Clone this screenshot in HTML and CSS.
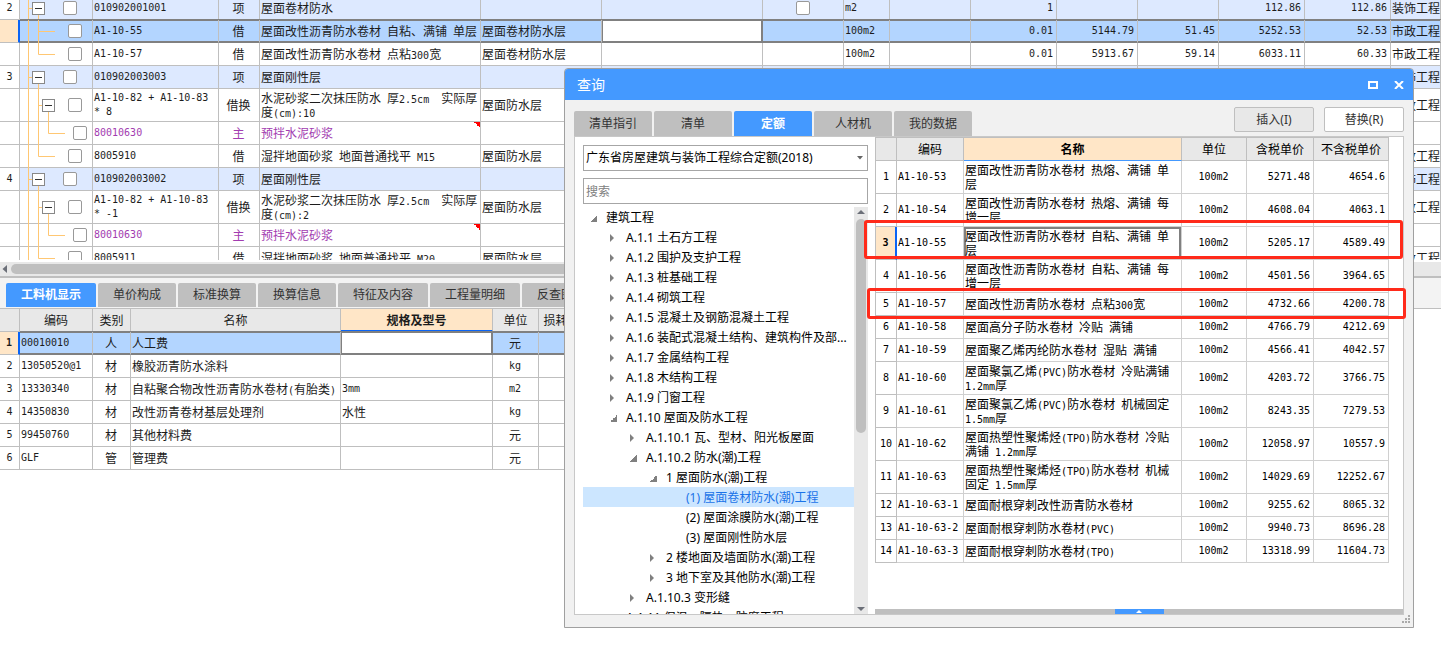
FILE: index.html
```html
<!DOCTYPE html>
<html lang="zh-CN">
<head>
<meta charset="utf-8">
<title>查询</title>
<link rel="stylesheet" href="styles.css">
</head>
<body>
<svg class="defs" aria-hidden="true">
  <symbol id="l1"><path d="M8.500 11.500H12"/><line x1="8.500" y1="0" x2="8.500" y2="100%"/><line x1="18.500" y1="18" x2="18.500" y2="100%"/></symbol>
  <symbol id="l2"><line x1="8.500" y1="0" x2="8.500" y2="100%"/><line x1="18.500" y1="0" x2="18.500" y2="100%"/><path d="M18.500 11.500H35"/></symbol>
  <symbol id="l2end"><line x1="8.500" y1="0" x2="8.500" y2="100%"/><path d="M18.500 0V11.500H35"/></symbol>
  <symbol id="l2open"><line x1="8.500" y1="0" x2="8.500" y2="100%"/><line x1="18.500" y1="0" x2="18.500" y2="100%"/><path d="M18.500 16.500H22"/><line x1="28.500" y1="22" x2="28.500" y2="100%"/></symbol>
  <symbol id="l3"><line x1="8.500" y1="0" x2="8.500" y2="100%"/><line x1="18.500" y1="0" x2="18.500" y2="100%"/><path d="M28.500 0V11.500H45"/></symbol>
</svg>

<main class="workspace">
  <div class="sheet-view">
    <table class="grid sheet">
      <colgroup><col class="w20"><col class="w73"><col class="w126"><col class="w41"><col class="w221"><col class="w121"><col class="w161"><col class="w81"><col class="w46"><col class="w81"><col class="w86"><col class="w81"><col class="w81"><col class="w86"><col class="w86"><col></colgroup>
      <tbody>
      <tr class="item"><th class="n">2</th><td class="branch"><svg class="lines"><use href="#l1"/></svg><div class="node d1"><button class="fold" aria-label="折叠"></button><input type="checkbox" aria-label="选择"></div></td><td class="n">010902001001</td><td class="c">项</td><td>屋面卷材防水</td><td></td><td></td><td class="c"><input type="checkbox" aria-label="汇总"></td><td class="n">m2</td><td></td><td class="n r">1</td><td></td><td></td><td class="n r">112.86</td><td class="n r">112.86</td><td>装饰工程</td></tr>
      <tr class="sel"><th></th><td class="branch"><svg class="lines"><use href="#l2"/></svg><div class="node leaf2"><input type="checkbox" aria-label="选择"></div></td><td class="n">A1-10-55</td><td class="c">借</td><td>屋面改性沥青防水卷材<span class="n"> </span>自粘、满铺<span class="n"> </span>单层</td><td>屋面卷材防水层</td><td class="edit"></td><td></td><td class="n">100m2</td><td></td><td class="n r">0.01</td><td class="n r">5144.79</td><td class="n r">51.45</td><td class="n r">5252.53</td><td class="n r">52.53</td><td>市政工程</td></tr>
      <tr><th></th><td class="branch"><svg class="lines"><use href="#l2end"/></svg><div class="node leaf2"><input type="checkbox" aria-label="选择"></div></td><td class="n">A1-10-57</td><td class="c">借</td><td>屋面改性沥青防水卷材<span class="n"> </span>点粘<span class="n">300</span>宽</td><td>屋面卷材防水层</td><td></td><td></td><td class="n">100m2</td><td></td><td class="n r">0.01</td><td class="n r">5913.67</td><td class="n r">59.14</td><td class="n r">6033.11</td><td class="n r">60.33</td><td>市政工程</td></tr>
      <tr class="item"><th class="n">3</th><td class="branch"><svg class="lines"><use href="#l1"/></svg><div class="node d1"><button class="fold" aria-label="折叠"></button><input type="checkbox" aria-label="选择"></div></td><td class="n">010902003003</td><td class="c">项</td><td>屋面刚性层</td><td></td><td></td><td></td><td></td><td></td><td></td><td></td><td></td><td></td><td></td><td>装饰工程</td></tr>
      <tr class="tall"><th></th><td class="branch"><svg class="lines"><use href="#l2open"/></svg><div class="node d2"><button class="fold" aria-label="折叠"></button><input type="checkbox" aria-label="选择"></div></td><td class="n">A1-10-82 + A1-10-83<br>* 8</td><td class="c">借换</td><td>水泥砂浆二次抹压防水<span class="n"> </span>厚<span class="n">2.5cm&nbsp; </span>实际厚<br>度<span class="n">(cm):10</span></td><td>屋面防水层</td><td></td><td></td><td></td><td></td><td></td><td></td><td></td><td></td><td></td><td>市政工程</td></tr>
      <tr class="main-material"><th></th><td class="branch"><svg class="lines"><use href="#l3"/></svg><div class="node leaf3"><input type="checkbox" aria-label="选择"></div></td><td class="n">80010630</td><td class="c">主</td><td class="flagged">预拌水泥砂浆</td><td></td><td></td><td></td><td></td><td></td><td></td><td></td><td></td><td></td><td></td><td></td></tr>
      <tr><th></th><td class="branch"><svg class="lines"><use href="#l2end"/></svg><div class="node leaf2"><input type="checkbox" aria-label="选择"></div></td><td class="n">8005910</td><td class="c">借</td><td>湿拌地面砂浆<span class="n"> </span>地面普通找平<span class="n"> M15</span></td><td>屋面防水层</td><td></td><td></td><td></td><td></td><td></td><td></td><td></td><td></td><td></td><td>市政工程</td></tr>
      <tr class="item"><th class="n">4</th><td class="branch"><svg class="lines"><use href="#l1"/></svg><div class="node d1"><button class="fold" aria-label="折叠"></button><input type="checkbox" aria-label="选择"></div></td><td class="n">010902003002</td><td class="c">项</td><td>屋面刚性层</td><td></td><td></td><td></td><td></td><td></td><td></td><td></td><td></td><td></td><td></td><td>装饰工程</td></tr>
      <tr class="tall"><th></th><td class="branch"><svg class="lines"><use href="#l2open"/></svg><div class="node d2"><button class="fold" aria-label="折叠"></button><input type="checkbox" aria-label="选择"></div></td><td class="n">A1-10-82 + A1-10-83<br>* -1</td><td class="c">借换</td><td>水泥砂浆二次抹压防水<span class="n"> </span>厚<span class="n">2.5cm&nbsp; </span>实际厚<br>度<span class="n">(cm):2</span></td><td>屋面防水层</td><td></td><td></td><td></td><td></td><td></td><td></td><td></td><td></td><td></td><td>市政工程</td></tr>
      <tr class="main-material"><th></th><td class="branch"><svg class="lines"><use href="#l3"/></svg><div class="node leaf3"><input type="checkbox" aria-label="选择"></div></td><td class="n">80010630</td><td class="c">主</td><td class="flagged">预拌水泥砂浆</td><td></td><td></td><td></td><td></td><td></td><td></td><td></td><td></td><td></td><td></td><td></td></tr>
      <tr><th></th><td class="branch"><svg class="lines"><use href="#l2end"/></svg><div class="node leaf2"><input type="checkbox" aria-label="选择"></div></td><td class="n">8005911</td><td class="c">借</td><td>湿拌地面砂浆<span class="n"> </span>地面普通找平<span class="n"> M20</span></td><td>屋面防水层</td><td></td><td></td><td></td><td></td><td></td><td></td><td></td><td></td><td></td><td>市政工程</td></tr>
      </tbody>
    </table>
  </div>

  <div class="hscroll"><svg width="11" height="14" viewBox="0 0 11 14"><path d="M7 3v8L2.500 7z" fill="#6b6f78"/></svg><div class="hthumb"></div></div>

  <nav class="tabs detail-tabs" role="tablist">
    <button class="tab active" role="tab">工料机显示</button>
    <button class="tab" role="tab">单价构成</button>
    <button class="tab" role="tab">标准换算</button>
    <button class="tab" role="tab">换算信息</button>
    <button class="tab" role="tab">特征及内容</button>
    <button class="tab" role="tab">工程量明细</button>
    <button class="tab" role="tab">反查图形工程量</button>
  </nav>

  <table class="grid detail">
    <colgroup><col class="w20"><col class="w73"><col class="w38"><col class="w210"><col class="w152"><col class="w46"><col class="w46"></colgroup>
    <thead><tr><th></th><th>编码</th><th>类别</th><th>名称</th><th class="hot">规格及型号</th><th>单位</th><th>损耗率</th></tr></thead>
    <tbody>
    <tr class="sel"><th class="n">1</th><td class="n first">00010010</td><td class="c">人</td><td>人工费</td><td class="edit"></td><td class="c">元</td><td></td></tr>
    <tr><th class="n">2</th><td class="n">13050520@1</td><td class="c">材</td><td>橡胶沥青防水涂料</td><td></td><td class="n c">kg</td><td></td></tr>
    <tr><th class="n">3</th><td class="n">13330340</td><td class="c">材</td><td>自粘聚合物改性沥青防水卷材<span class="n">(</span>有胎类<span class="n">)</span></td><td class="n">3mm</td><td class="n c">m2</td><td></td></tr>
    <tr><th class="n">4</th><td class="n">14350830</td><td class="c">材</td><td>改性沥青卷材基层处理剂</td><td>水性</td><td class="n c">kg</td><td></td></tr>
    <tr><th class="n">5</th><td class="n">99450760</td><td class="c">材</td><td>其他材料费</td><td></td><td class="c">元</td><td></td></tr>
    <tr><th class="n">6</th><td class="n">GLF</td><td class="c">管</td><td>管理费</td><td></td><td class="c">元</td><td></td></tr>
    </tbody>
  </table>
</main>

<section class="dialog" role="dialog" aria-labelledby="dialog-title">
  <header class="titlebar">
    <h1 id="dialog-title">查询</h1>
    <button class="win" aria-label="最大化"><svg width="10" height="8" viewBox="0 0 10 8"><path d="M0 0h10v8H0zM2 2v4h6V2z" fill="#fff" fill-rule="evenodd"/></svg></button>
    <button class="win" aria-label="关闭"><svg width="10" height="8" viewBox="0 0 10 8"><path d="M1 0l8 8M9 0L1 8" stroke="#fff" stroke-width="2"/></svg></button>
  </header>
  <div class="toolbar">
    <nav class="tabs query-tabs" role="tablist">
      <button class="tab" role="tab">清单指引</button>
      <button class="tab" role="tab">清单</button>
      <button class="tab active" role="tab">定额</button>
      <button class="tab" role="tab">人材机</button>
      <button class="tab" role="tab">我的数据</button>
    </nav>
    <div class="actions"><button class="btn insert">插入(I)</button><button class="btn">替换(R)</button></div>
  </div>
  <div class="panes">
    <div class="catalog">
      <div class="picker">
        <select aria-label="定额库"><option>广东省房屋建筑与装饰工程综合定额(2018)</option></select>
        <svg width="6" height="4" viewBox="0 0 6 4"><path d="M0 0h6L3 3.500z" fill="#666"/></svg>
      </div>
      <input class="search" type="text" placeholder="搜索" aria-label="搜索">
      <div class="tree-view">
        <ul class="tree">
          <li class="t0 open">建筑工程</li>
          <li class="t1 shut">A.1.1 土石方工程</li>
          <li class="t1 shut">A.1.2 围护及支护工程</li>
          <li class="t1 shut">A.1.3 桩基础工程</li>
          <li class="t1 shut">A.1.4 砌筑工程</li>
          <li class="t1 shut">A.1.5 混凝土及钢筋混凝土工程</li>
          <li class="t1 shut">A.1.6 装配式混凝土结构、建筑构件及部...</li>
          <li class="t1 shut">A.1.7 金属结构工程</li>
          <li class="t1 shut">A.1.8 木结构工程</li>
          <li class="t1 shut">A.1.9 门窗工程</li>
          <li class="t1 open">A.1.10 屋面及防水工程</li>
          <li class="t2 shut">A.1.10.1 瓦、型材、阳光板屋面</li>
          <li class="t2 open">A.1.10.2 防水(潮)工程</li>
          <li class="t3 open">1 屋面防水(潮)工程</li>
          <li class="t4 current">(1) 屋面卷材防水(潮)工程</li>
          <li class="t4">(2) 屋面涂膜防水(潮)工程</li>
          <li class="t4">(3) 屋面刚性防水层</li>
          <li class="t3 shut">2 楼地面及墙面防水(潮)工程</li>
          <li class="t3 shut">3 地下室及其他防水(潮)工程</li>
          <li class="t2 shut">A.1.10.3 变形缝</li>
          <li class="t1 shut">A.1.11 保温、隔热、防腐工程</li>
        </ul>
        <div class="vscroll">
          <svg width="14" height="12" viewBox="0 0 14 12"><path d="M3 7h8L7 3z" fill="#6b6f78"/></svg>
          <div class="vthumb"></div>
          <svg width="14" height="12" viewBox="0 0 14 12"><path d="M3 5h8L7 9z" fill="#6b6f78"/></svg>
        </div>
      </div>
    </div>
    <div class="results">
      <table class="grid quota">
        <colgroup><col class="w22"><col class="w67"><col class="w218"><col class="w65"><col class="w67"><col class="w75"></colgroup>
        <thead><tr><th></th><th>编码</th><th class="hot">名称</th><th>单位</th><th>含税单价</th><th>不含税单价</th></tr></thead>
        <tbody>
        <tr class="tall"><th class="n">1</th><td class="n">A1-10-53</td><td>屋面改性沥青防水卷材<span class="n"> </span>热熔、满铺<span class="n"> </span>单<br>层</td><td class="n c">100m2</td><td class="n r">5271.48</td><td class="n r">4654.6</td></tr>
        <tr class="tall"><th class="n">2</th><td class="n">A1-10-54</td><td>屋面改性沥青防水卷材<span class="n"> </span>热熔、满铺<span class="n"> </span>每<br>增一层</td><td class="n c">100m2</td><td class="n r">4608.04</td><td class="n r">4063.1</td></tr>
        <tr class="tall picked"><th class="n">3</th><td class="n">A1-10-55</td><td class="focus">屋面改性沥青防水卷材<span class="n"> </span>自粘、满铺<span class="n"> </span>单<br>层</td><td class="n c">100m2</td><td class="n r">5205.17</td><td class="n r">4589.49</td></tr>
        <tr class="tall"><th class="n">4</th><td class="n">A1-10-56</td><td>屋面改性沥青防水卷材<span class="n"> </span>自粘、满铺<span class="n"> </span>每<br>增一层</td><td class="n c">100m2</td><td class="n r">4501.56</td><td class="n r">3964.65</td></tr>
        <tr><th class="n">5</th><td class="n">A1-10-57</td><td>屋面改性沥青防水卷材<span class="n"> </span>点粘<span class="n">300</span>宽</td><td class="n c">100m2</td><td class="n r">4732.66</td><td class="n r">4200.78</td></tr>
        <tr><th class="n">6</th><td class="n">A1-10-58</td><td>屋面高分子防水卷材<span class="n"> </span>冷贴<span class="n"> </span>满铺</td><td class="n c">100m2</td><td class="n r">4766.79</td><td class="n r">4212.69</td></tr>
        <tr><th class="n">7</th><td class="n">A1-10-59</td><td>屋面聚乙烯丙纶防水卷材<span class="n"> </span>湿贴<span class="n"> </span>满铺</td><td class="n c">100m2</td><td class="n r">4566.41</td><td class="n r">4042.57</td></tr>
        <tr class="tall"><th class="n">8</th><td class="n">A1-10-60</td><td>屋面聚氯乙烯<span class="n">(PVC)</span>防水卷材<span class="n"> </span>冷贴满铺<br><span class="n">1.2mm</span>厚</td><td class="n c">100m2</td><td class="n r">4203.72</td><td class="n r">3766.75</td></tr>
        <tr class="tall"><th class="n">9</th><td class="n">A1-10-61</td><td>屋面聚氯乙烯<span class="n">(PVC)</span>防水卷材<span class="n"> </span>机械固定<br><span class="n">1.5mm</span>厚</td><td class="n c">100m2</td><td class="n r">8243.35</td><td class="n r">7279.53</td></tr>
        <tr class="tall"><th class="n">10</th><td class="n">A1-10-62</td><td>屋面热塑性聚烯烃<span class="n">(TPO)</span>防水卷材<span class="n"> </span>冷贴<br>满铺<span class="n"> 1.2mm</span>厚</td><td class="n c">100m2</td><td class="n r">12058.97</td><td class="n r">10557.9</td></tr>
        <tr class="tall"><th class="n">11</th><td class="n">A1-10-63</td><td>屋面热塑性聚烯烃<span class="n">(TPO)</span>防水卷材<span class="n"> </span>机械<br>固定<span class="n"> 1.5mm</span>厚</td><td class="n c">100m2</td><td class="n r">14029.69</td><td class="n r">12252.67</td></tr>
        <tr><th class="n">12</th><td class="n">A1-10-63-1</td><td>屋面耐根穿刺改性沥青防水卷材</td><td class="n c">100m2</td><td class="n r">9255.62</td><td class="n r">8065.32</td></tr>
        <tr><th class="n">13</th><td class="n">A1-10-63-2</td><td>屋面耐根穿刺防水卷材<span class="n">(PVC)</span></td><td class="n c">100m2</td><td class="n r">9940.73</td><td class="n r">8696.28</td></tr>
        <tr><th class="n">14</th><td class="n">A1-10-63-3</td><td>屋面耐根穿刺防水卷材<span class="n">(TPO)</span></td><td class="n c">100m2</td><td class="n r">13318.99</td><td class="n r">11604.73</td></tr>
        </tbody>
      </table>
      <div class="drawer"><button aria-label="展开"><svg width="6" height="3" viewBox="0 0 6 3"><path d="M0 3h6L3 0z" fill="#fff"/></svg></button></div>
    </div>
  </div>
  <svg class="grip" width="8" height="8" viewBox="0 0 8 8"><path d="M6 0h2v2H6zM3 3h2v2H3zM6 3h2v2H6zM0 6h2v2H0zM3 6h2v2H3zM6 6h2v2H6z" fill="#aaa"/></svg>
  <div class="mark mark-a"></div>
  <div class="mark mark-b"></div>
</section>
</body>
</html>
```

FILE: styles.css
```css
* { box-sizing: border-box; }
body {
  margin: 0;
  min-height: 100vh;
  position: relative;
  overflow: hidden;
  background: #fff;
  color: #1c1c1c;
  font: 12px/14px "Noto Sans", "Noto Sans CJK SC", sans-serif;
}
button, input, select { font: inherit; color: inherit; margin: 0; padding: 0; }
.defs { position: absolute; width: 0; height: 0; }

/* shared data grid */
.grid {
  table-layout: fixed;
  border-collapse: separate;
  border-spacing: 0;
  font-family: "Noto Sans CJK SC", sans-serif;
  white-space: nowrap;
}
.grid th, .grid td {
  height: 23px;
  padding: 0 0 1px 1px;
  border: 0 solid #bfbfbf;
  border-width: 0 1px 1px 0;
  text-align: left;
  vertical-align: middle;
  font-weight: 400;
}
.grid th { padding: 0; text-align: center; }
.grid thead th { background: #e8e8e8; overflow: hidden; }
.grid thead th.hot { background: #ffe6c7; font-weight: 700; border-bottom: 2px solid #0a64f5; }
.grid .tall th, .grid .tall td { height: 33px; }
.grid .n { font-family: "DejaVu Sans Mono", monospace; font-size: 10px; }
.grid span.n { white-space: pre; line-height: 1px; }
.grid .c { text-align: center; padding: 0 1px 1px 0; }
.grid .r { text-align: right; padding: 0 3px 1px 0; }

.w20 { width: 20px; } .w22 { width: 22px; } .w38 { width: 38px; } .w41 { width: 41px; }
.w46 { width: 46px; } .w65 { width: 65px; } .w67 { width: 67px; } .w73 { width: 73px; }
.w75 { width: 75px; } .w81 { width: 81px; } .w86 { width: 86px; } .w121 { width: 121px; }
.w126 { width: 126px; } .w152 { width: 152px; } .w161 { width: 161px; } .w210 { width: 210px; }
.w218 { width: 218px; } .w221 { width: 221px; }

.grid .sel td {
  background: #b3d5ff;
  border-bottom-color: #808080;
  box-shadow: 0 -1px #808080, inset 0 1px #808080, inset 0 -1px #808080;
}
.grid .sel th { background: #ffe6c7; border-right: 2px solid #0a64f5; font-weight: 700; }
.grid .sel td.edit { background: #fff; border-right-color: #808080; box-shadow: 0 -1px #808080, inset 1px 1px #808080, inset -1px -1px #808080; }

/* bill of quantities */
.sheet-view { height: 260px; overflow: hidden; }
.sheet { width: 100%; margin-top: -3px; }
.item td { background: #dde9ff; }
.main-material td { color: #a23cb0; }
.grid .branch { position: relative; padding: 0; }
.lines {
  position: absolute;
  top: 0;
  left: 0;
  width: 72px;
  height: calc(100% + 1px);
  stroke: #ffc773;
  fill: none;
}
.node { position: relative; display: flex; align-items: center; }
.node.d1 { padding-left: 12px; gap: 18px; }
.node.d2 { padding-left: 22px; gap: 13px; }
.node.leaf2 { padding-left: 48px; }
.node.leaf3 { padding-left: 53px; }
.fold {
  width: 13px;
  height: 13px;
  border: 1px solid #888;
  background: linear-gradient(#333, #333) center / 7px 1px no-repeat #fff;
}
input[type="checkbox"] {
  appearance: none;
  display: inline-block;
  width: 14px;
  height: 14px;
  border: 1px solid #999;
  border-radius: 2px;
  background: #fff;
  vertical-align: middle;
}
.grid .flagged { background: linear-gradient(45deg, transparent 50%, #f00 50%) right top / 6px 6px no-repeat; }

.hscroll {
  display: flex;
  align-items: center;
  height: 14px;
  margin-top: 2px;
  background: #e8e8e8;
}
.hthumb { width: 60%; height: 10px; border-radius: 5px; background: #bfbfbf; }

/* tab strips */
.tabs { display: flex; gap: 2px; }
.tab {
  height: 24px;
  padding: 0 15px;
  border: 0;
  border-radius: 2px 2px 0 0;
  background: #bfbfbf;
  color: #333;
  white-space: nowrap;
}
.tab.active { background: #4499ff; color: #fff; font-weight: 700; }
.detail-tabs {
  padding: 5px 6px 1px;
  border-top: 2px solid #bfbfbf;
  border-bottom: 1px solid #bfbfbf;
  background: #f3f3f3;
}

.detail { width: 585px; }

/* query window */
.dialog {
  position: absolute;
  left: 564px;
  top: 68px;
  width: 850px;
  height: 560px;
  display: flex;
  flex-direction: column;
  border: 1px solid #a0a0a0;
  border-radius: 4px 4px 0 0;
  background: #f1f1f1;
  color: #000;
}
.titlebar {
  display: flex;
  align-items: center;
  gap: 16px;
  height: 31px;
  padding: 0 9px 0 12px;
  border-radius: 3px 3px 0 0;
  background: #4499ff;
}
.titlebar h1 { flex: 1; margin: 0; color: #fff; font-size: 14px; line-height: 20px; font-weight: 400; }
.win { display: flex; border: 0; background: none; }
.toolbar { display: flex; justify-content: space-between; align-items: flex-end; height: 36px; padding: 0 9px; }
.query-tabs .tab { width: 78px; height: 25px; padding: 0; }
.actions { display: flex; gap: 10px; padding-bottom: 4px; }
.btn { width: 80px; height: 25px; border: 1px solid #bfbfbf; border-radius: 2px; background: #fff; color: #333; }
.btn.insert { background: #e8e8e8; }
.panes {
  flex: 1;
  min-height: 0;
  display: flex;
  margin: 0 9px 12px;
  border: 1px solid #c8c8c8;
  background: #fff;
}
.catalog { display: flex; flex-direction: column; width: 300px; padding: 8px 7px 0 8px; }
.picker { position: relative; }
.picker svg { position: absolute; right: 5px; top: 11px; }
.picker select, .search {
  display: block;
  width: 100%;
  height: 26px;
  padding: 0 2px;
  border: 1px solid #a6a6a6;
  border-radius: 0;
  background: #fff;
  appearance: none;
}
.search { margin: 7px 0 3px; }
.search::placeholder { color: #808080; opacity: 1; }
.tree-view { flex: 1; min-height: 0; display: flex; overflow: hidden; }
.tree { flex: 1; margin: 0; padding: 0; list-style: none; line-height: 20px; white-space: nowrap; }
.tree li { height: 20px; padding-top: 1px; background-repeat: no-repeat; }
.tree li::before { content: ""; display: inline-block; width: 16px; height: 8px; }
.tree .open::before { background: linear-gradient(135deg, transparent 50%, #808080 50%) 0 1px / 7px 7px no-repeat; }
.tree .shut::before { background: #808080; clip-path: polygon(0 0, 4px 50%, 0 100%); }
.tree .t0 { padding-left: 7px; }
.tree .t1 { padding-left: 27px; }
.tree .t2 { padding-left: 47px; }
.tree .t3 { padding-left: 67px; }
.tree .t4 { padding-left: 87px; }
.current { background: #cce6ff; color: #1a73e8; }
.vscroll { display: flex; flex-direction: column; align-items: center; width: 14px; background: #e8e8e8; }
.vscroll svg { flex: none; }
.vthumb { width: 10px; height: 214px; margin-bottom: auto; border-radius: 5px; background: #bfbfbf; }

.results { flex: 1; display: flex; flex-direction: column; justify-content: space-between; align-items: flex-start; }
.quota { width: 514px; }
.quota td { border-color: #d0d0d0; }
.grid.quota th:first-child { border-left-width: 1px; }
.grid.quota thead th { height: 24px; border-top-width: 1px; }
.grid.quota thead th.hot { border-bottom: 1px solid #4499ff; }
.quota .picked th.n { background: #ffe6c7; border-right: 2px solid #0a64f5; font-weight: 700; }
.quota .focus { box-shadow: inset 0 0 0 2px #808080; }
.drawer { display: flex; justify-content: center; width: 100%; height: 5px; background: #bfbfbf; }
.drawer button { display: flex; justify-content: center; align-items: center; width: 49px; border: 0; background: #4499ff; }
.grip { position: absolute; right: 3px; bottom: 4px; }

/* red call-outs over the result rows */
.mark { position: absolute; width: 539px; border: 3px solid #ff2a1a; border-radius: 3px; }
.mark-a { left: 299px; top: 151px; height: 39px; }
.mark-b { left: 302px; top: 219px; height: 31px; }
```
